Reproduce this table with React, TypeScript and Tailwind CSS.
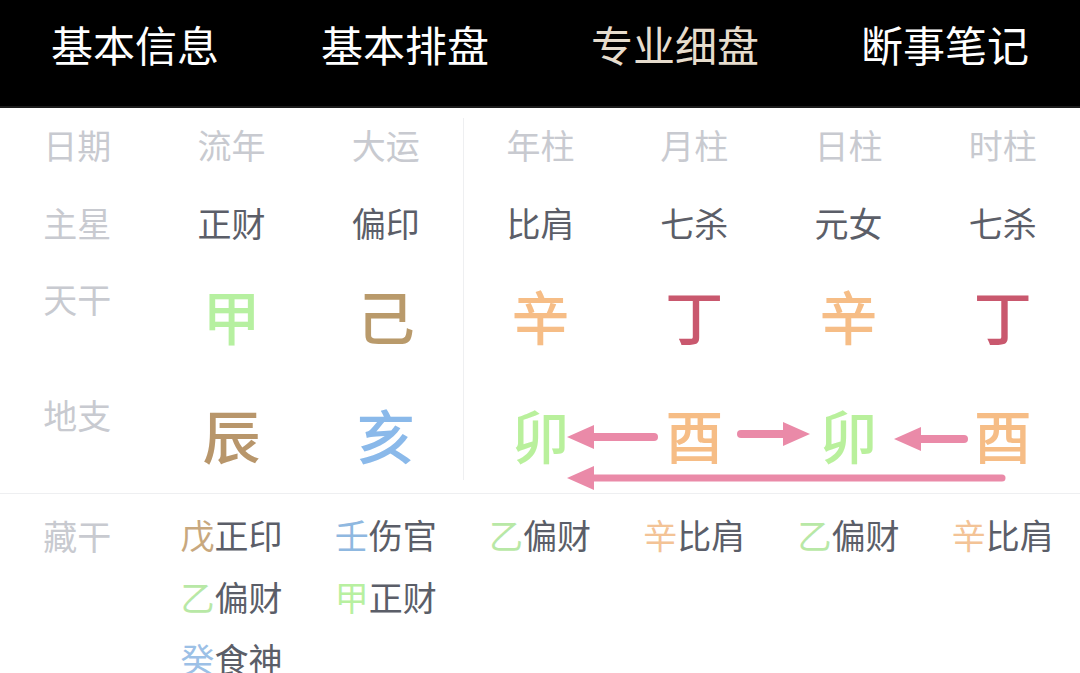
const FONT = { fontFamily: '"Noto Sans CJK SC", "Noto Sans", sans-serif' };

const tabs = [
  { label: '基本信息', active: false },
  { label: '基本排盘', active: false },
  { label: '专业细盘', active: true },
  { label: '断事笔记', active: false },
];

const headers = ['流年', '大运', '年柱', '月柱', '日柱', '时柱'];
const stars = ['正财', '偏印', '比肩', '七杀', '元女', '七杀'];

const tiangan = [
  { c: '甲', cls: 'text-[#b6f0a0]' },
  { c: '己', cls: 'text-[#b99a6b]' },
  { c: '辛', cls: 'text-[#f6bd86]' },
  { c: '丁', cls: 'text-[#c9586e]' },
  { c: '辛', cls: 'text-[#f6bd86]' },
  { c: '丁', cls: 'text-[#c9586e]' },
];

const dizhi = [
  { c: '辰', cls: 'text-[#b8966b]' },
  { c: '亥', cls: 'text-[#8ab9ea]' },
  { c: '卯', cls: 'text-[#b9f09c]' },
  { c: '酉', cls: 'text-[#f6bd86]' },
  { c: '卯', cls: 'text-[#b9f09c]' },
  { c: '酉', cls: 'text-[#f6bd86]' },
];

type Hidden = { s: string; cls: string; g: string };

const canggan: Hidden[][] = [
  [
    { s: '戊', cls: 'text-[#c8a87e]', g: '正印' },
    { s: '乙', cls: 'text-[#b8e8a6]', g: '偏财' },
    { s: '癸', cls: 'text-[#9cc0e6]', g: '食神' },
  ],
  [
    { s: '壬', cls: 'text-[#8fb8e0]', g: '伤官' },
    { s: '甲', cls: 'text-[#b8f0a0]', g: '正财' },
  ],
  [{ s: '乙', cls: 'text-[#b8e8a6]', g: '偏财' }],
  [{ s: '辛', cls: 'text-[#f3c396]', g: '比肩' }],
  [{ s: '乙', cls: 'text-[#b8e8a6]', g: '偏财' }],
  [{ s: '辛', cls: 'text-[#f3c396]', g: '比肩' }],
];

function Arrow({ tail, tip, y, w = 8 }: { tail: number; tip: number; y: number; w?: number }) {
  const dir = tip > tail ? 1 : -1;
  const head = 27;
  const base = tip - dir * head;
  return (
    <g fill="#ea8aa8" stroke="#ea8aa8">
      <line x1={tail} y1={y} x2={base + dir * 2} y2={y} strokeWidth={w} strokeLinecap="round" />
      <polygon points={`${tip},${y} ${base},${y - 12} ${base},${y + 12}`} stroke="none" />
    </g>
  );
}

function Cell({ i, children, className = '' }: { i: number; children: React.ReactNode; className?: string }) {
  return (
    <div className={`flex justify-center ${i === 2 ? 'border-l border-[#eeeff1]' : ''} ${className}`}>
      {children}
    </div>
  );
}

export default function App() {
  return (
    <div className="w-[1080px] h-[673px] overflow-hidden bg-white" style={FONT}>
      <div className="grid grid-cols-4 h-[108px] bg-black border-b-2 border-[#1c1c1c]">
        {tabs.map((t) => (
          <div
            key={t.label}
            className={`flex items-center justify-center pb-[18px] text-[42px] leading-none ${t.active ? 'text-[#e6dccd]' : 'text-white'}`}>
            {t.label}
          </div>
        ))}
      </div>

      <div className="pt-[10px]">
        <div className="grid grid-cols-7 h-[66px] items-center text-[34px] leading-none text-[#c8cad0]">
          <div className="flex h-full items-center justify-center pb-[12px]">日期</div>
          {headers.map((h, i) => (
            <Cell key={i} i={i} className="h-full items-center pb-[12px]">
              {h}
            </Cell>
          ))}
        </div>

        <div className="grid grid-cols-7 h-[78px] items-center text-[34px] leading-none">
          <div className="flex justify-center text-[#c8cad0]">主星</div>
          {stars.map((s, i) => (
            <Cell key={i} i={i} className="h-full items-center text-[#5b5e68]">
              {s}
            </Cell>
          ))}
        </div>

        <div className="grid grid-cols-7 h-[116px]">
          <div className="flex justify-center pt-[20px] text-[34px] leading-none text-[#c8cad0]">天干</div>
          {tiangan.map((t, i) => (
            <Cell key={i} i={i} className={`pt-[24px] text-[58px] font-medium leading-none ${t.cls}`}>
              {t.c}
            </Cell>
          ))}
        </div>

        <div className="relative grid grid-cols-7 h-[102px]">
          <div className="flex justify-center pt-[20px] text-[34px] leading-none text-[#c8cad0]">地支</div>
          {dizhi.map((t, i) => (
            <Cell key={i} i={i} className={`pt-[27px] text-[58px] font-medium leading-none ${t.cls}`}>
              {t.c}
            </Cell>
          ))}
          <svg className="absolute left-0 top-0 overflow-visible" width={1080} height={102}>
            <Arrow tail={654} tip={567} y={59} />
            <Arrow tail={741} tip={810} y={56} />
            <Arrow tail={964} tip={894} y={61} />
            <Arrow tail={1002} tip={567} y={100} w={7} />
          </svg>
        </div>
      </div>

      <div className="mt-[13px] border-t border-[#eeeff1] grid grid-cols-7 pt-[24px] text-[34px] leading-none">
        <div className="flex justify-center text-[#c8cad0] pt-[1px]">藏干</div>
        {canggan.map((col, i) => (
          <div key={i} className="flex flex-col items-center gap-[28px]">
            {col.map((h, j) => (
              <div key={j} className="flex">
                <span className={h.cls}>{h.s}</span>
                <span className="text-[#5b5e68]">{h.g}</span>
              </div>
            ))}
          </div>
        ))}
      </div>
    </div>
  );
}
